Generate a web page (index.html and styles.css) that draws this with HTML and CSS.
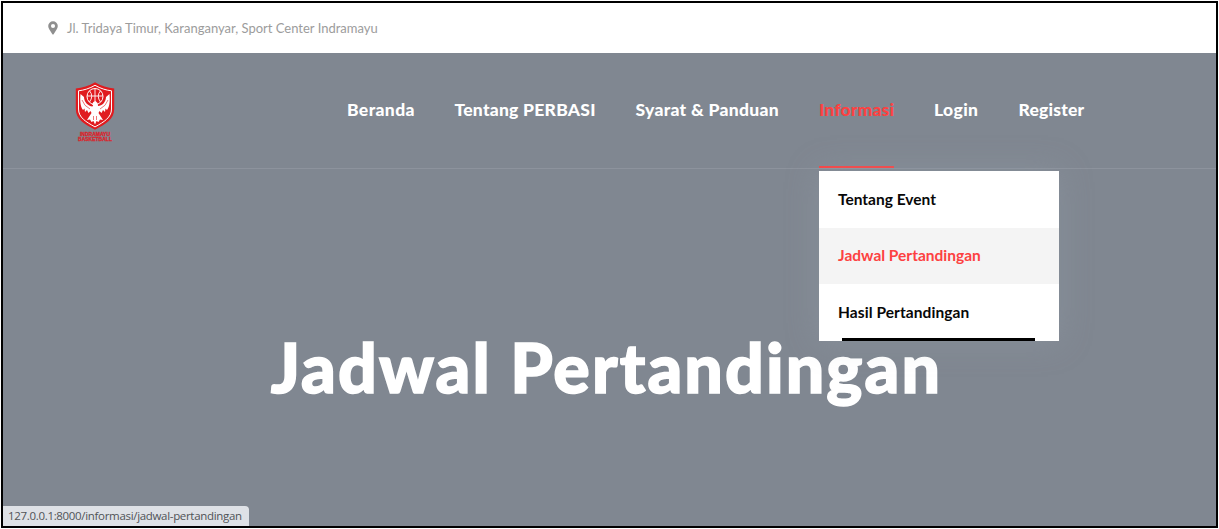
FILE: index.html
```html
<!DOCTYPE html>
<html lang="id">
<head>
<meta charset="utf-8">
<title>Jadwal Pertandingan</title>
<link rel="stylesheet" href="styles.css">
</head>
<body>
<div class="window">
  <div class="topbar">
    <svg class="pin" viewBox="0 0 10 14"><path fill-rule="evenodd" d="M5 .3A4.800 4.800 0 0 0 .2 5.100C.2 7.400 2 9.300 4.200 13.100Q5 14.100 5.800 13.100C8 9.300 9.800 7.400 9.800 5.100A4.800 4.800 0 0 0 5 .3ZM5 3a2 2 0 1 1 0 4.100A2 2 0 0 1 5 3Z"/></svg>
    <span class="address">Jl. Tridaya Timur, Karanganyar, Sport Center Indramayu</span>
  </div>
  <header class="header">
    <a class="logo">
      <svg class="shield" viewBox="0 0 40 48">
        <path class="rim" d="M20 .3C14 4 7 6 .8 6.500V27C.8 37 9 42 20 47.700C31 42 39.200 37 39.200 27V6.500C33 6 26 4 20 .3Z"/>
        <path class="inline" d="M20 3.300C14.500 6.500 9 8.200 3.500 8.800V27C3.500 35.500 11 40 20 44.900C29 40 36.500 35.500 36.500 27V8.800C31 8.200 25.500 6.500 20 3.300Z"/>
        <path class="bird" d="M5.500 12C5 18 5 24 8 28L9.500 26.500L10 30L12 28L13.500 31L15.500 29L16.500 31L12 38L15 37.500L16.500 40L18.500 39L20 42.500L21.500 39L23.500 40L25 37.500L28 38L23.500 31L24.500 29L26.500 31L28 28L30 30L30.500 26.500L32 28C35 24 35 18 34.500 12L31 15C31 20 27 24 23 24L22 21L19.500 20L17 22L18.500 22.500L17.500 24.500C13 24 9 20 9 15Z"/>
        <path class="feather" d="M7 18Q9 24 15 27M33 18Q31 24 25 27M18.500 34V38M21.500 34V38"/>
        <circle class="ball" cx="20" cy="14.500" r="8"/>
        <path class="seam" d="M20 6.500V20M12 14H28M14.500 8.800Q19 14 14.500 20M25.500 8.800Q21 14 25.500 20"/>
        <path class="bird" d="M17 23L18.300 20L20.500 19L22.500 21L23 26H17.500L18.500 22.800Z"/>
      </svg>
      <span class="club">INDRAMAYU</span>
      <span class="club">BASKETBALL</span>
    </a>
    <nav class="nav">
      <a class="item beranda">Beranda</a>
      <a class="item tentang">Tentang PERBASI</a>
      <a class="item syarat">Syarat &amp; Panduan</a>
      <div class="item informasi active">Informasi
        <div class="menu">
          <a class="option event">Tentang Event</a>
          <a class="option jadwal hover">Jadwal Pertandingan</a>
          <a class="option hasil">Hasil Pertandingan</a>
        </div>
      </div>
      <a class="item login">Login</a>
      <a class="item register">Register</a>
    </nav>
  </header>
  <main class="hero"><h1 class="title">Jadwal Pertandingan</h1></main>
  <div class="status">127.0.0.1:8000/informasi/jadwal-pertandingan</div>
</div>
</body>
</html>
```
FILE: styles.css
```css
* { box-sizing: border-box; }
body { margin: 0; background: #fff; font-family: Lato, "Open Sans", sans-serif; }
.window { position: relative; width: 1217px; height: 527px; margin: 1px; border: 2px solid #000; background: #808791; overflow: hidden; display: flex; flex-direction: column; }
.topbar { height: 50px; flex: none; background: #fff; display: flex; align-items: center; padding: 0 0 0 45px; }
.pin { width: 10px; height: 14px; fill: #8f8f8f; margin-right: 9px; }
.address { font-size: 13px; color: #9c9c9c; white-space: nowrap; }
.header { height: 116px; flex: none; display: flex; border-bottom: 1px solid #8d939d; }
.logo { width: 40px; margin-left: 72px; padding-top: 29px; display: flex; flex-direction: column; align-items: center; }
.shield { width: 40px; height: 48px; margin-bottom: 2px; }
.rim { fill: #e01b1f; }
.inline { fill: #e01b1f; stroke: #fff; stroke-width: 1; }
.ball { fill: #e01b1f; stroke: #fff; stroke-width: 1; }
.seam { fill: none; stroke: #fff; stroke-width: .9; }
.bird { fill: #fff; }
.feather { fill: none; stroke: #e01b1f; stroke-width: .6; }
.club { font: 900 5px/5px "Liberation Sans", sans-serif; color: #d9252c; -webkit-text-stroke: .3px #d9252c; }
.nav { display: flex; gap: 40px; margin-left: 232px; font-size: 17.500px; font-weight: 900; line-height: 113px; color: #fff; }
.item { position: relative; height: 115px; white-space: nowrap; }
.beranda { width: 67.500px; letter-spacing: .38px; }
.tentang { width: 141px; letter-spacing: .24px; }
.syarat { width: 143.500px; letter-spacing: .3px; }
.informasi { width: 75px; letter-spacing: .15px; }
.login { width: 44.500px; letter-spacing: .35px; }
.register { width: 67px; letter-spacing: .2px; }
.active { color: #fd4141; border-bottom: 2px solid #fd4141; }
.menu { position: absolute; z-index: 2; left: 0; top: 118px; width: 240px; height: 170px; background: #fff; box-shadow: 0 0 30px rgba(150,160,172,.35); font-size: 15.500px; font-weight: 700; line-height: 56px; letter-spacing: 0; color: #080808; }
.menu::after { content: ""; position: absolute; left: 23px; bottom: 0; width: 193px; height: 3px; background: #000; }
.option { display: block; height: 56px; padding-left: 19px; }
.event { height: 57px; }
.hasil { letter-spacing: .08px; }
.hover { background: #f4f4f4; color: #fd4141; line-height: 55px; }
.hero { flex: 1; display: flex; justify-content: center; padding: 157px 6px 0 0; }
.title { margin: 0; font-size: 68px; line-height: 82px; font-weight: 900; letter-spacing: 2.100px; color: #fff; -webkit-text-stroke: 1.500px #fff; white-space: nowrap; }
.status { position: absolute; left: 0; bottom: 0; width: 246px; height: 20px; padding-left: 5px; background: #dee1e6; border-radius: 0 4px 0 0; font: 11.500px/20px "Open Sans", sans-serif; letter-spacing: -.32px; color: #505357; white-space: nowrap; }
```
